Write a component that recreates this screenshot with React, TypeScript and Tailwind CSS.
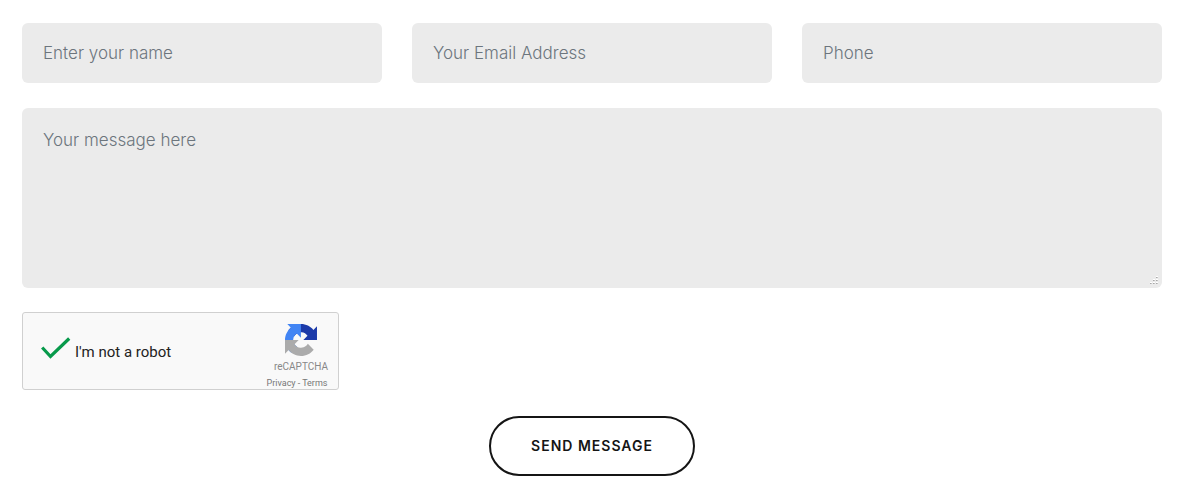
import React from "react";

const field =
  "block w-full rounded-md bg-[#ebebeb] px-[21px] font-[Inter,sans-serif] text-[17px] font-light text-gray-800 placeholder:text-[#6c757d] outline-none focus:ring-1 focus:ring-gray-400";

function RecaptchaLogo() {
  return (
    <svg viewBox="0 0 64 64" className="size-8" aria-hidden="true">
      <path
        fill="#1c3aa9"
        d="M64 31.955l-.033-1.37V4.687l-7.16 7.16C50.948 4.674 42.033.093 32.05.093c-10.4 0-19.622 4.96-25.458 12.64l11.736 11.86a15.55 15.55 0 0 1 4.754-5.334c2.05-1.6 4.952-2.906 8.968-2.906.485 0 .86.057 1.135.163 4.976.393 9.288 3.14 11.828 7.124l-8.307 8.307L64 31.953"
      />
      <path
        fill="#4285f4"
        d="M31.862.094l-1.37.033H4.594l7.16 7.16C4.58 13.147 0 22.06 0 32.046c0 10.4 4.96 19.622 12.64 25.458L24.5 45.768a15.55 15.55 0 0 1-5.334-4.754c-1.6-2.05-2.906-4.952-2.906-8.968 0-.485.057-.86.163-1.135.393-4.976 3.14-9.288 7.124-11.828l8.307 8.307L31.86.095"
      />
      <path
        fill="#ababab"
        d="M.001 32.045l.033 1.37v25.898l7.16-7.16c5.86 7.173 14.774 11.754 24.76 11.754 10.4 0 19.622-4.96 25.458-12.64l-11.736-11.86a15.55 15.55 0 0 1-4.754 5.334c-2.05 1.6-4.952 2.906-8.968 2.906-.485 0-.86-.057-1.135-.163-4.976-.393-9.288-3.14-11.828-7.124l8.307-8.307c-10.522.04-22.4.066-27.295-.005"
      />
    </svg>
  );
}

function ResizeGrip() {
  const dots = [
    [6, 0],
    [3, 3],
    [6, 3],
    [0, 6],
    [3, 6],
    [6, 6],
  ];
  return (
    <svg
      viewBox="0 0 8 8"
      className="pointer-events-none absolute right-1 bottom-1 size-2"
      shapeRendering="crispEdges"
      aria-hidden="true"
    >
      {dots.map(([x, y]) => (
        <g key={`${x}-${y}`}>
          <rect x={x} y={y} width="2" height="2" fill="#ffffff" />
          <rect x={x} y={y + 1} width="2" height="1" fill="#c4c4c4" />
          <rect x={x} y={y + 1} width="1" height="1" fill="#a8a8a8" />
        </g>
      ))}
    </svg>
  );
}

function Recaptcha() {
  return (
    <div className="flex w-[317px] max-w-full items-stretch justify-between rounded-[3px] border border-[#d0d0d0] bg-[#f9f9f9] pr-[10px] pl-[18px] font-[Roboto,sans-serif]">
      <label className="flex items-center gap-1 pt-[2px] text-[15px] text-[#222222]">
        <span className="relative block size-[30px]">
          <input type="checkbox" defaultChecked className="peer block size-full appearance-none" />
          <svg
            viewBox="0 0 30 30"
            fill="none"
            stroke="#079a4b"
            strokeWidth="3.2"
            className="pointer-events-none absolute inset-0 hidden peer-checked:block"
            aria-hidden="true"
          >
            <path d="M1.2 10.5L9.5 19.5L28.2 1.5" />
          </svg>
        </span>
        I'm not a robot
      </label>
      <div className="flex flex-col items-center pt-[11px]">
        <div className="flex flex-col items-center pl-2">
          <RecaptchaLogo />
          <span className="pt-[3px] text-[10px] leading-4 text-[#888888]">reCAPTCHA</span>
        </div>
        <div className="flex gap-[2px] pt-[2px] text-[9px] leading-3 text-[#777777]">
          <a href="#privacy">Privacy</a>
          <span>-</span>
          <a href="#terms">Terms</a>
        </div>
      </div>
    </div>
  );
}

export default function App() {
  return (
    <form
      className="bg-white pt-[23px] pr-[18px] pb-5 pl-[22px]"
      onSubmit={(e) => e.preventDefault()}
    >
      <div className="grid grid-cols-3 gap-[30px]">
        <input type="text" aria-label="Enter your name" placeholder="Enter your name" className={`${field} h-[60px]`} />
        <input type="email" aria-label="Your Email Address" placeholder="Your Email Address" className={`${field} h-[60px]`} />
        <input type="tel" aria-label="Phone" placeholder="Phone" className={`${field} h-[60px]`} />
      </div>
      <div className="relative mt-[25px] mb-6">
        <textarea
          aria-label="Your message here"
          placeholder="Your message here"
          className={`${field} h-[180px] resize-none py-5`}
        />
        <ResizeGrip />
      </div>
      <Recaptcha />
      <div className="mt-[26px] flex justify-center">
        <button
          type="submit"
          className="h-[60px] rounded-full border-2 border-[#151515] px-10 font-[Inter,sans-serif] text-sm font-semibold tracking-[1px] text-[#151515] uppercase"
        >
          Send message
        </button>
      </div>
    </form>
  );
}
